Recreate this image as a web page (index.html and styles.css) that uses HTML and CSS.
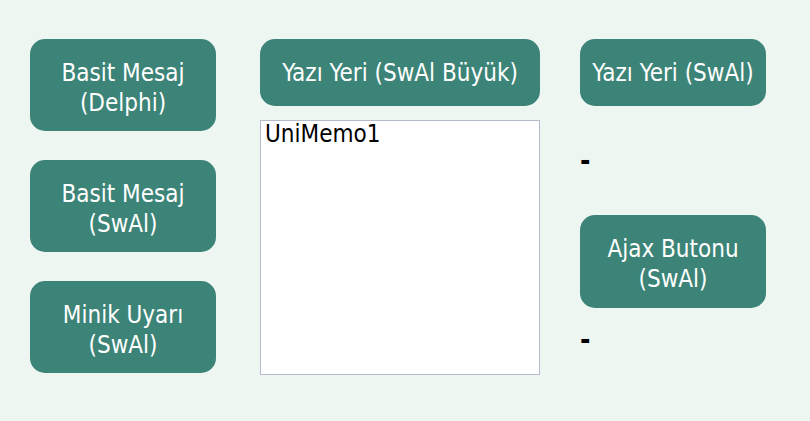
FILE: index.html
```html
<!DOCTYPE html>
<html lang="tr">
<head>
    <meta charset="UTF-8">
    <title>SwAl Demo</title>
    <link rel="stylesheet" href="styles.css">
</head>
<body>
    <div class="page">
        <div class="col col-left">
            <button class="btn tall">Basit Mesaj<br>(Delphi)</button>
            <button class="btn tall">Basit Mesaj<br>(SwAl)</button>
            <button class="btn tall">Minik Uyarı<br>(SwAl)</button>
        </div>

        <div class="col col-mid">
            <button class="btn wide">Yazı Yeri (SwAl Büyük)</button>
            <textarea class="memo">UniMemo1</textarea>
        </div>

        <div class="col col-right">
            <button class="btn short">Yazı Yeri (SwAl)</button>
            <div class="lbl lbl-one">-</div>
            <button class="btn tall ajax">Ajax Butonu<br>(SwAl)</button>
            <div class="lbl lbl-two">-</div>
        </div>
    </div>
</body>
</html>
```

FILE: styles.css
```css
body {
    margin: 0;
    padding: 0;
    background-color: #eef6f1;
    font-family: "DejaVu Sans Condensed", "DejaVu Sans", Tahoma, sans-serif;
    font-stretch: condensed;
}
.page {
    display: flex;
    padding: 39px 0 0 30px;
    gap: 44px;
}
.col {
    display: flex;
    flex-direction: column;
}
.col-left {
    width: 186px;
    gap: 29px;
}
.col-mid {
    width: 280px;
    gap: 14px;
}
.col-right {
    width: 186px;
    margin-left: -4px;
}
.btn {
    background-color: #3d8478;
    color: #ffffff;
    border: none;
    border-radius: 15px;
    font-family: "DejaVu Sans Condensed", "DejaVu Sans", Tahoma, sans-serif;
    font-stretch: condensed;
    font-size: 24px;
    line-height: 30px;
    padding: 0;
    text-align: center;
    cursor: pointer;
}
.btn.tall {
    height: 92px;
    padding-top: 5px;
}
.btn.ajax {
    height: 93px;
}
.btn.short,
.btn.wide {
    height: 67px;
    padding-top: 1px;
}
.memo {
    box-sizing: border-box;
    width: 280px;
    height: 255px;
    margin: 0;
    border: 1px solid #b4bccb;
    background: #ffffff;
    color: #000000;
    font-family: "DejaVu Sans Condensed", "DejaVu Sans", Tahoma, sans-serif;
    font-stretch: condensed;
    font-size: 24px;
    line-height: 26px;
    padding: 0 4px;
    resize: none;
    overflow: hidden;
}
.lbl {
    font-size: 28px;
    font-weight: bold;
    line-height: 20px;
    height: 20px;
    color: #000000;
}
.lbl-one {
    margin: 45px 0 44px;
}
.lbl-two {
    margin-top: 22px;
}
```
